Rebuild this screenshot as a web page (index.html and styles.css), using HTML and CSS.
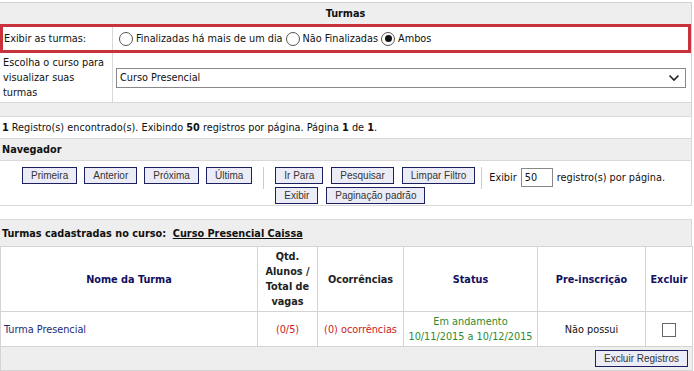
FILE: index.html
```html
<!DOCTYPE html>
<html lang="pt-BR">
<head>
    <meta charset="UTF-8">
    <title>Turmas</title>
    <link rel="stylesheet" href="styles.css">
</head>
<body>
    <div class="page">
        <div class="panel">
            <div class="panel-title">Turmas</div>
            <div class="form-row destaque">
                <div class="form-label">Exibir as turmas:</div>
                <div class="form-field">
                    <label class="radio"><span class="radio-dot"></span>Finalizadas há mais de um dia</label>
                    <label class="radio"><span class="radio-dot"></span>Não Finalizadas</label>
                    <label class="radio"><span class="radio-dot marcado"></span>Ambos</label>
                </div>
            </div>
            <div class="form-row">
                <div class="form-label">Escolha o curso para<br>visualizar suas<br>turmas</div>
                <div class="form-field">
                    <div class="select">
                        <span>Curso Presencial</span>
                        <svg width="12" height="8" viewBox="0 0 12 8"><path d="M1.5 1.5 L6 6 L10.5 1.5" fill="none" stroke="#222" stroke-width="1.6"/></svg>
                    </div>
                </div>
            </div>
            <div class="faixa"></div>
        </div>

        <div class="info"><b>1</b> Registro(s) encontrado(s). Exibindo <b>50</b> registros por página. Página <b>1</b> de <b>1</b>.</div>

        <div class="section-title">Navegador</div>
        <div class="nav">
            <div class="nav-group">
                <button class="btn">Primeira</button>
                <button class="btn">Anterior</button>
                <button class="btn">Próxima</button>
                <button class="btn">Última</button>
            </div>
            <div class="sep"></div>
            <div class="nav-group wrap">
                <button class="btn">Ir Para</button>
                <button class="btn">Pesquisar</button>
                <button class="btn">Limpar Filtro</button>
                <button class="btn">Exibir</button>
                <button class="btn">Paginação padrão</button>
            </div>
            <div class="sep sep-dir"></div>
            <div class="nav-exibir">
                Exibir <span class="input-num">50</span> registro(s) por página.
            </div>
        </div>

        <div class="espaco"></div>

        <div class="section-title alto">Turmas cadastradas no curso:&nbsp; <a href="#" class="curso-link">Curso Presencial Caissa</a></div>
        <table class="grid">
            <tr>
                <th class="c-nome">Nome da Turma</th>
                <th class="c-qtd">Qtd. Alunos / Total de vagas</th>
                <th class="c-oco">Ocorrências</th>
                <th class="c-status">Status</th>
                <th class="c-pre">Pre-inscrição</th>
                <th class="c-exc">Excluir</th>
            </tr>
            <tr>
                <td class="left"><a href="#" class="turma-link">Turma Presencial</a></td>
                <td class="vermelho">(0/5)</td>
                <td class="vermelho">(0) ocorrências</td>
                <td class="verde">Em andamento<br>10/11/2015 a 10/12/2015</td>
                <td>Não possui</td>
                <td><span class="check"></span></td>
            </tr>
            <tr class="rodape">
                <td colspan="6"><button class="btn">Excluir Registros</button></td>
            </tr>
        </table>
    </div>
</body>
</html>
```

FILE: styles.css
```css
body {
    margin: 0;
    font-family: "DejaVu Sans Condensed", "DejaVu Sans", Verdana, sans-serif;
    font-size: 10.8px;
    color: #111;
    background-color: white;
}

.page {
    width: 692px;
    padding-top: 2px;
}

.panel {
    border-top: 1px solid #d2d2d2;
    border-right: 1px solid #d2d2d2;
}

.panel-title {
    height: 21px;
    line-height: 21px;
    text-align: center;
    font-weight: bold;
    background-color: #eeeeee;
}

.form-row {
    display: grid;
    grid-template-columns: 113px 1fr;
    border-bottom: 1px solid #d8d8d8;
}

.form-row.destaque {
    grid-template-columns: 110px 1fr;
    border: 3px solid #c8323c;
    height: 23px;
}

.form-label {
    padding: 2px 2px 2px 3px;
    line-height: 15px;
    border-right: 1px solid #d8d8d8;
    display: flex;
    align-items: center;
}

.destaque .form-label {
    padding-left: 1px;
}

.form-field {
    display: flex;
    align-items: center;
    padding-left: 3px;
}

.destaque .form-field {
    padding-left: 6px;
}

.radio {
    display: flex;
    align-items: center;
}

.radio-dot {
    width: 12px;
    height: 12px;
    border: 1px solid #555;
    border-radius: 50%;
    margin: 0 3px;
    background: white;
    position: relative;
}

.radio:first-child .radio-dot {
    margin-left: 0;
}

.radio-dot.marcado::after {
    content: "";
    position: absolute;
    left: 2.5px;
    top: 2.5px;
    width: 7px;
    height: 7px;
    border-radius: 50%;
    background: #111;
}

.select {
    width: 570px;
    height: 20px;
    box-sizing: border-box;
    border: 1px solid #888;
    display: flex;
    align-items: center;
    justify-content: space-between;
    padding: 0 5px 0 3px;
}

.faixa {
    height: 13px;
    background-color: #eeeeee;
}

.info {
    height: 21px;
    line-height: 21px;
    padding-left: 2px;
    border-top: 1px solid #d8d8d8;
    border-right: 1px solid #d8d8d8;
}

.section-title {
    height: 21px;
    line-height: 21px;
    padding-left: 2px;
    font-weight: bold;
    background-color: #eeeeee;
    border-top: 1px solid #d8d8d8;
    border-bottom: 1px solid #d8d8d8;
    border-right: 1px solid #d8d8d8;
}

.section-title.alto {
    height: 26px;
    line-height: 28px;
    border-bottom: none;
}

.curso-link {
    color: #111;
}

.nav {
    display: flex;
    align-items: flex-start;
    height: 38px;
    padding: 6px 0 0 22px;
    border-bottom: 1px solid #d8d8d8;
    border-right: 1px solid #d8d8d8;
}

.nav-group {
    display: flex;
    gap: 7px;
    flex-shrink: 0;
}

.nav-group.wrap {
    flex-wrap: wrap;
    width: 202px;
    gap: 3px 8px;
}

.sep {
    width: 1px;
    height: 22px;
    background-color: #cccccc;
    margin: 0 11px;
    flex-shrink: 0;
}

.sep-dir {
    margin: 0 7px 0 4px;
}

.btn {
    font-family: "Liberation Sans", Arial, sans-serif;
    font-size: 10px;
    color: #333;
    background-color: #ececf6;
    border: 1px solid #1c2060;
    height: 17px;
    padding: 0 8px;
    line-height: 14px;
}

.nav-exibir {
    display: flex;
    align-items: center;
    height: 20px;
    gap: 4px;
    white-space: nowrap;
}

.input-num {
    width: 27px;
    height: 17px;
    line-height: 17px;
    border: 1px solid #888;
    padding-left: 3px;
}

.espaco {
    height: 13px;
}

.grid {
    width: 693px;
    border-collapse: collapse;
}

.grid th, .grid td {
    border: 1px solid #d4d4d4;
    text-align: center;
    padding: 2px 3px;
}

.grid th {
    color: #101060;
    font-weight: bold;
    height: 58px;
    line-height: 15px;
}

.grid td {
    height: 30px;
    line-height: 15px;
}

.c-nome { width: 250px; }
.c-qtd { width: 53px; color: #222 !important; }
.c-oco { width: 79px; color: #222 !important; }
.c-status { width: 127px; }
.c-pre { width: 101px; }
.c-exc { width: 40px; }

.grid td.left {
    text-align: left;
}

.turma-link {
    color: #1c2a78;
    text-decoration: none;
}

.vermelho {
    color: #cc1a1a;
}

.verde {
    color: #2e8b2e;
}

.check {
    display: inline-block;
    width: 12px;
    height: 12px;
    border: 1px solid #666;
    vertical-align: middle;
}

.grid tr.rodape td {
    background-color: #eeeeee;
    text-align: right;
    height: 19px;
    padding: 2px 4px;
}
```
